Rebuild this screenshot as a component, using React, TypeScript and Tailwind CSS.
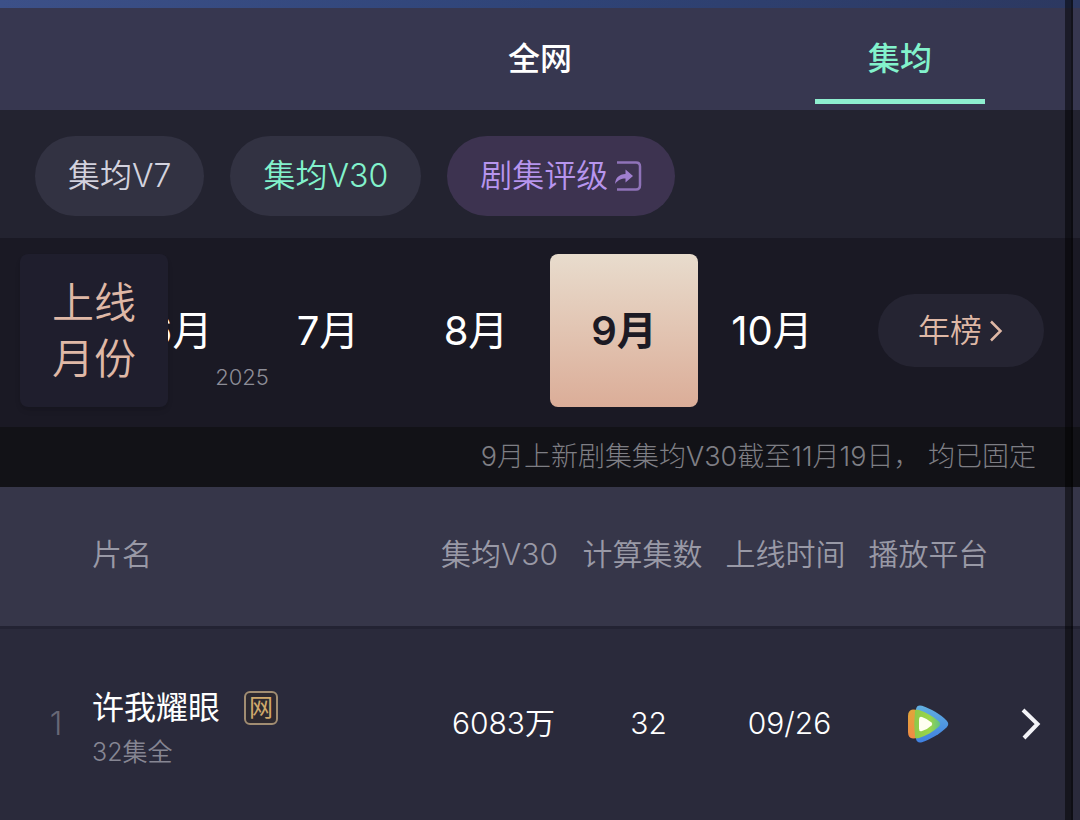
import { useState } from "react";

const tabs = ["全网", "集均"];

const months = [
  { label: "6月" },
  { label: "7月", year: "2025" },
  { label: "8月" },
  { label: "9月" },
  { label: "10月" },
];

const columns = ["集均V30", "计算集数", "上线时间", "播放平台"];

const shows = [
  { rank: 1, name: "许我耀眼", tag: "网", episodes: "32集全", average: "6083万", counted: "32", date: "09/26" },
];

function ShareIcon() {
  return (
    <svg width="28" height="32" viewBox="0 0 28 32" fill="none" aria-hidden="true">
      <path d="M3 2.5H22Q26 2.5 26 6.500V25Q26 29.500 22 29.500H3" stroke="#8f73b8" strokeWidth="2.500" />
      <path d="M1 24C1.500 17.500 5 14.500 11.500 14V9.500L19 16L11.500 22.500V18.500C7 18.500 4 20 1 24Z" fill="#a07fd0" />
    </svg>
  );
}

function TencentVideoIcon() {
  return (
    <svg width="42" height="38" viewBox="0 0 42 38" className="mx-auto" role="img" aria-label="腾讯视频">
      <defs>
        <linearGradient id="tvBlue" x1="0" y1="0" x2="0" y2="1">
          <stop offset="0" stopColor="#62b0e0" />
          <stop offset="1" stopColor="#3f7fe0" />
        </linearGradient>
        <linearGradient id="tvOrange" x1="0" y1="0" x2="0" y2="1">
          <stop offset="0" stopColor="#e0a63a" />
          <stop offset="1" stopColor="#f08a45" />
        </linearGradient>
        <linearGradient id="tvGreen" x1="0" y1="0" x2="1" y2="0">
          <stop offset="0" stopColor="#8cc94a" />
          <stop offset="0.6" stopColor="#9bd64a" />
          <stop offset="1" stopColor="#5fc183" />
        </linearGradient>
      </defs>
      <path d="M8 4Q9 -.5 14 .8C23 4 32 9 38.500 15.500Q42 19 38.500 22.500C32 29 23 34 14 37.200Q9 38.500 8 34Z" fill="url(#tvBlue)" />
      <path d="M0 11Q0 5 5 4.500Q8 4.500 11 5.500V32.500Q8 33.500 5 33.500Q0 33 0 27Z" fill="url(#tvOrange)" />
      <path d="M7 6Q7 4 11 5C18 7.500 25 11 31 16.500Q33.500 19 31 21.500C25 27 18 30.500 11 33Q7 34 7 32Q5.500 19 7 6Z" fill="url(#tvGreen)" />
      <path d="M11 14.500Q11 11 14 12Q20 14 23.500 17.500Q25 19 23.500 20.500Q20 24 14 26Q11 27 11 23.500Z" fill="#fffff0" />
    </svg>
  );
}

export default function App() {
  const [tab, setTab] = useState("集均");
  const [metric, setMetric] = useState("V30");
  const [month, setMonth] = useState("9月");

  return (
    <div className="relative min-h-screen overflow-hidden bg-[#2a2a3b] font-['Inter','Noto_Sans_CJK_SC',sans-serif] font-[350] text-white">
      <div className="h-2 bg-linear-to-r from-[#3c5088] via-[#2f4478] to-[#2c3860]" />

      {/* Tabs */}
      <nav className="grid h-[102px] grid-cols-3 bg-[#373750]">
        {tabs.map((name, i) => (
          <button
            key={name}
            onClick={() => setTab(name)}
            className={`relative text-[32px] font-medium ${i === 0 ? "col-start-2" : ""} ${
              tab === name ? "text-[#82f2cc]" : "text-white"
            }`}
          >
            {name}
            {tab === name && <span className="absolute inset-x-[95px] bottom-1.5 h-[5px] bg-[#8eefd0]" />}
          </button>
        ))}
      </nav>

      {/* Metric filters */}
      <div className="flex h-32 items-center gap-[26px] bg-[#232330] px-[35px] pt-1 text-[32px]">
        <button
          onClick={() => setMetric("V7")}
          className={`h-20 rounded-full bg-[#323242] px-[33px] ${metric === "V7" ? "text-[#82f2cc]" : "text-[#d3d2de]"}`}
        >
          集均V7
        </button>
        <button
          onClick={() => setMetric("V30")}
          className={`h-20 rounded-full bg-[#323242] px-[33px] ${metric === "V30" ? "text-[#82f2cc]" : "text-[#d3d2de]"}`}
        >
          集均V30
        </button>
        <a href="#rating" className="flex h-20 items-center gap-1.5 rounded-full bg-[#3d3350] px-[33px] text-[#b795ee]">
          剧集评级
          <ShareIcon />
        </a>
      </div>

      {/* Month picker */}
      <div className="flex h-[189px] items-center bg-[#1a1924] pr-9 pb-1 pl-5">
        <div className="flex h-[153px] w-[148px] shrink-0 items-center justify-center rounded-lg bg-[#1f1e2d] text-center text-[42px] leading-[56px] text-[#dfb8a6] shadow-md">
          <span>
            上线
            <br />
            月份
          </span>
        </div>
        <div className="flex min-w-0 flex-1 justify-end overflow-hidden">
          {months.map(({ label, year }) => (
            <button
              key={label}
              onClick={() => setMonth(label)}
              className={`relative h-[153px] w-[148px] shrink-0 rounded-lg text-[40px] ${
                month === label
                  ? "bg-linear-to-b from-[#e8dccd] to-[#dbad98] font-semibold text-[#1c1a24]"
                  : "font-normal text-white"
              }`}
            >
              {label}
              {year && (
                <span className="absolute bottom-4 -left-3 -translate-x-1/2 text-[22px] leading-7 font-light text-[#8d8d97]">
                  {year}
                </span>
              )}
            </button>
          ))}
        </div>
        <a
          href="#year"
          className="ml-8 flex h-[73px] w-[166px] shrink-0 items-center justify-center gap-2 rounded-full bg-[#252432] text-[32px] text-[#dfb8a6]"
        >
          年榜
          <svg width="14" height="24" viewBox="0 0 14 24" fill="none" aria-hidden="true">
            <path d="M1 2.500L10.500 12L1 21.500" stroke="currentColor" strokeWidth="2.500" />
          </svg>
        </a>
      </div>

      <p className="h-[60px] bg-[#121217] pr-11 text-right text-[27px] leading-[60px] font-light text-[#7e7e84]">
        9月上新剧集集均V30截至11月19日， 均已固定
      </p>

      {/* Ranking */}
      <table className="w-full table-fixed border-collapse">
        <colgroup>
          <col className="w-[92px]" />
          <col />
          <col className="w-[143px]" />
          <col className="w-[143px]" />
          <col className="w-[143px]" />
          <col className="w-[143px]" />
          <col className="w-20" />
        </colgroup>
        <thead>
          <tr className="h-[140px] border-b-3 border-[#232333] bg-[#363649] text-[30px] text-[#9999a6]">
            <td />
            <th className="pb-1 text-left font-[350]">片名</th>
            {columns.map((name) => (
              <th key={name} className="pb-1 font-[350] whitespace-nowrap">
                {name}
              </th>
            ))}
            <td />
          </tr>
        </thead>
        <tbody>
          {shows.map((show) => (
            <tr key={show.rank} className="h-48 text-center text-[30px]">
              <td className="pl-5 text-[32px] font-light text-[#686876]">{show.rank}</td>
              <td className="pt-2 text-left">
                <div className="flex items-center gap-6 text-[32px] leading-[48px] font-normal">
                  {show.name}
                  <span className="flex h-[34px] w-[34px] items-center justify-center rounded-md border-2 border-[#a18d72] bg-[#2d2930] text-[24px] leading-none text-[#d0a96c]">
                    {show.tag}
                  </span>
                </div>
                <div className="text-[25px] leading-10 text-[#868693]">{show.episodes}</div>
              </td>
              <td className="pl-2">{show.average}</td>
              <td className="pl-3">{show.counted}</td>
              <td className="pl-2">{show.date}</td>
              <td>
                <TencentVideoIcon />
              </td>
              <td>
                <a href="#detail" aria-label={show.name} className="flex pl-5">
                  <svg width="22" height="32" viewBox="0 0 22 32" fill="none" aria-hidden="true">
                    <path d="M3 2L17.500 16L4 30" stroke="#f4f4f8" strokeWidth="4" />
                  </svg>
                </a>
              </td>
            </tr>
          ))}
        </tbody>
      </table>

      {/* Right edge of the sheet */}
      <div className="pointer-events-none absolute inset-y-0 right-[7px] w-2 border-r-2 border-black/30 bg-black/50" />
    </div>
  );
}
